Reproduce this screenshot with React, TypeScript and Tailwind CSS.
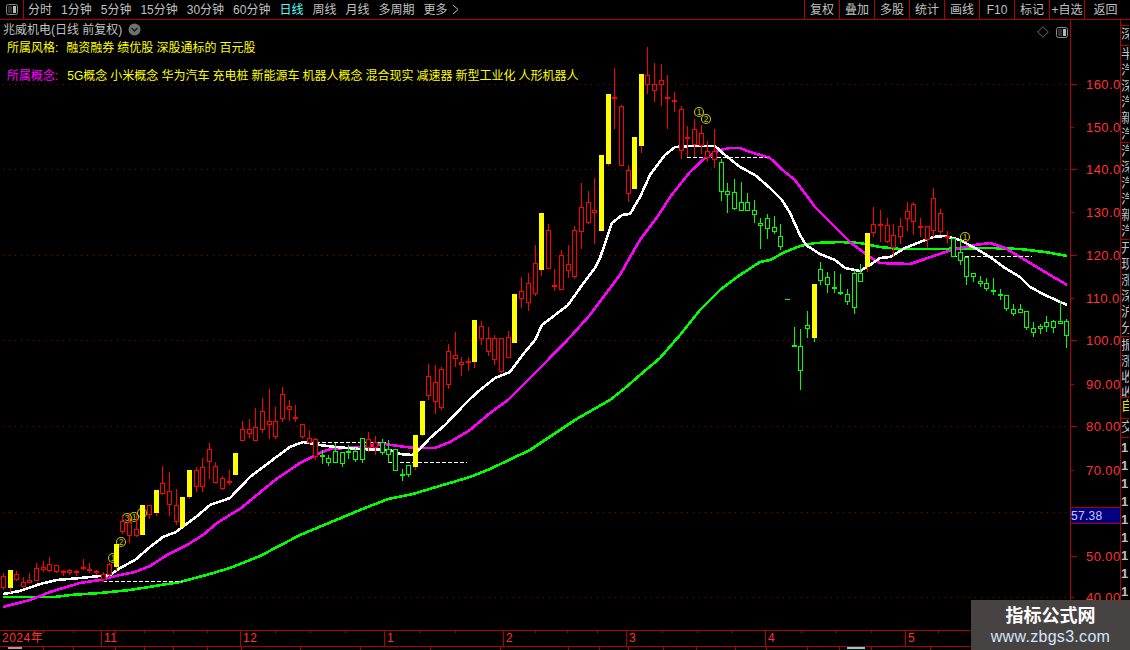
const RED = '#ff0000';
const GREEN = '#00ff00';
const YELLOW = '#ffff00';

// x, kind, wick top, body top, body bottom, wick bottom (page pixels)
// r = red, g = green, y = yellow bar with red wick, v = yellow bar with green wick
type Candle = [number, 'r' | 'g' | 'y' | 'v', number, number, number, number];

const candles: Candle[] = [
  [3, 'r', 573, 576, 588, 590], [10, 'y', 570, 570, 588, 593], [16, 'r', 571, 574, 580, 581],
  [23, 'r', 577, 582, 587, 587], [29, 'r', 573, 580, 583, 583], [36, 'r', 563, 568, 581, 581],
  [43, 'r', 561, 567, 570, 572], [49, 'r', 557, 564, 571, 572], [56, 'r', 565, 565, 572, 573],
  [63, 'r', 570, 571, 573, 576], [69, 'r', 569, 570, 573, 575], [76, 'r', 570, 571, 573, 576],
  [83, 'r', 559, 567, 569, 570], [89, 'r', 563, 569, 571, 573], [96, 'r', 570, 571, 573, 575],
  [103, 'r', 572, 574, 580, 582], [109, 'r', 563, 564, 575, 576], [116, 'y', 544, 544, 567, 571],
  [122, 'r', 515, 521, 532, 534], [129, 'r', 515, 522, 536, 543], [136, 'r', 515, 529, 536, 537],
  [142, 'y', 505, 505, 535, 535], [149, 'r', 505, 505, 515, 519], [156, 'y', 490, 490, 513, 516],
  [162, 'r', 466, 483, 494, 495], [169, 'r', 472, 491, 505, 516], [176, 'r', 489, 505, 522, 525],
  [182, 'y', 497, 497, 527, 527], [189, 'y', 470, 470, 497, 499], [196, 'r', 467, 470, 487, 492],
  [202, 'r', 458, 467, 487, 492], [209, 'r', 443, 449, 462, 479], [215, 'r', 462, 466, 483, 483],
  [222, 'r', 476, 478, 489, 490], [229, 'r', 470, 481, 483, 485], [235, 'y', 453, 453, 475, 475],
  [242, 'r', 421, 429, 441, 441], [249, 'r', 419, 429, 434, 438], [255, 'r', 408, 427, 441, 441],
  [262, 'r', 398, 411, 430, 433], [269, 'r', 389, 421, 425, 439], [275, 'r', 407, 421, 437, 439],
  [282, 'r', 387, 394, 419, 422], [289, 'r', 400, 406, 410, 421], [295, 'r', 405, 417, 419, 422],
  [302, 'r', 424, 424, 437, 439], [309, 'r', 430, 438, 443, 444], [315, 'r', 438, 439, 457, 460],
  [322, 'g', 450, 455, 457, 464], [328, 'g', 455, 458, 463, 466], [335, 'g', 443, 451, 463, 463],
  [342, 'g', 452, 452, 464, 467], [348, 'g', 445, 451, 453, 459], [355, 'g', 448, 451, 460, 462],
  [362, 'g', 438, 438, 460, 463], [368, 'r', 432, 439, 448, 452], [375, 'r', 436, 442, 448, 455],
  [382, 'g', 439, 442, 453, 455], [388, 'g', 440, 449, 455, 463], [395, 'g', 449, 449, 471, 471],
  [402, 'g', 469, 474, 476, 481], [408, 'g', 465, 465, 475, 477], [415, 'y', 435, 435, 467, 470],
  [422, 'y', 401, 401, 435, 436], [428, 'r', 364, 376, 396, 400], [435, 'r', 365, 382, 402, 414],
  [441, 'r', 367, 369, 408, 410], [448, 'r', 344, 351, 385, 389], [455, 'r', 332, 355, 359, 367],
  [461, 'r', 357, 362, 365, 376], [468, 'r', 357, 361, 363, 371], [474, 'y', 320, 320, 362, 368],
  [481, 'r', 321, 326, 339, 345], [488, 'r', 327, 338, 352, 356], [494, 'r', 335, 338, 360, 365],
  [501, 'r', 338, 338, 372, 373], [508, 'r', 331, 337, 358, 358], [514, 'y', 294, 294, 343, 343],
  [521, 'r', 277, 291, 299, 308], [528, 'r', 273, 283, 303, 311], [535, 'r', 245, 263, 294, 296],
  [541, 'y', 213, 213, 270, 276], [548, 'r', 224, 230, 269, 269], [554, 'r', 269, 285, 287, 291],
  [561, 'r', 250, 255, 290, 290], [568, 'r', 245, 264, 271, 278], [574, 'r', 226, 230, 277, 279],
  [581, 'r', 183, 207, 232, 249], [588, 'r', 191, 202, 223, 224], [594, 'r', 178, 210, 213, 244],
  [601, 'y', 155, 155, 231, 231], [608, 'y', 94, 94, 164, 166], [614, 'r', 68, 97, 99, 129],
  [621, 'r', 105, 106, 166, 166], [628, 'r', 165, 170, 194, 202], [634, 'y', 137, 137, 189, 189],
  [641, 'y', 74, 74, 146, 153], [647, 'r', 47, 75, 85, 94], [654, 'r', 63, 84, 91, 102],
  [661, 'r', 64, 80, 85, 106], [667, 'r', 75, 97, 99, 129], [674, 'r', 92, 100, 102, 112],
  [681, 'r', 106, 109, 151, 159], [687, 'r', 126, 137, 139, 157], [694, 'r', 119, 129, 145, 157],
  [701, 'r', 125, 133, 146, 154], [707, 'r', 141, 151, 158, 162], [714, 'r', 129, 151, 160, 168],
  [721, 'g', 159, 162, 192, 201], [727, 'g', 183, 191, 195, 213], [734, 'g', 179, 192, 209, 210],
  [741, 'g', 182, 202, 211, 211], [747, 'g', 193, 202, 211, 211], [754, 'g', 200, 210, 215, 223],
  [760, 'g', 218, 223, 226, 249], [767, 'g', 214, 218, 229, 239], [774, 'g', 216, 227, 232, 234],
  [780, 'g', 224, 236, 247, 250], [787, 'g', 299, 299, 300, 300], [794, 'g', 327, 345, 347, 347],
  [800, 'g', 329, 346, 371, 390], [807, 'g', 311, 325, 329, 338], [814, 'v', 284, 284, 338, 342],
  [820, 'g', 262, 269, 281, 285], [827, 'g', 272, 277, 285, 293], [834, 'g', 271, 287, 289, 293],
  [840, 'g', 274, 292, 294, 295], [847, 'g', 289, 294, 302, 305], [854, 'g', 270, 273, 308, 314],
  [860, 'g', 264, 273, 282, 282], [867, 'y', 233, 233, 267, 272], [873, 'r', 207, 224, 233, 237],
  [880, 'r', 210, 224, 226, 242], [887, 'r', 218, 225, 242, 243], [893, 'r', 224, 235, 248, 257],
  [900, 'r', 218, 226, 237, 244], [907, 'r', 202, 211, 219, 231], [913, 'r', 202, 204, 222, 235],
  [920, 'r', 218, 226, 228, 237], [927, 'r', 226, 226, 240, 248], [933, 'r', 188, 198, 231, 237],
  [940, 'r', 209, 213, 232, 235], [947, 'r', 231, 236, 238, 244], [953, 'g', 238, 238, 257, 257],
  [960, 'g', 240, 252, 261, 265], [966, 'g', 257, 257, 277, 285], [973, 'g', 273, 273, 277, 282],
  [980, 'g', 276, 281, 284, 287], [986, 'g', 278, 283, 289, 291], [993, 'g', 278, 290, 292, 295],
  [1000, 'g', 289, 294, 296, 300], [1006, 'g', 295, 295, 309, 311], [1013, 'g', 304, 309, 314, 316],
  [1020, 'g', 304, 309, 313, 313], [1026, 'g', 311, 311, 328, 330], [1033, 'g', 322, 328, 333, 337],
  [1040, 'g', 324, 326, 329, 334], [1046, 'g', 316, 322, 327, 332], [1053, 'g', 320, 321, 328, 333],
  [1060, 'g', 301, 321, 324, 324], [1066, 'g', 319, 321, 336, 348],
];

const whiteLine =
  '3,594 20,591 40,584 57,580 80,578 100,576 110,575 120,568 135,560 150,547 163,537 176,532 196,517 210,505 230,498 250,477 275,458 290,447 303,442 320,445 335,447 360,449 390,450 400,454 412,455 420,449 430,438 445,425 465,404 470,399 480,390 495,378 510,372 525,352 535,340 542,325 555,315 568,305 580,288 595,268 600,258 612,223 622,215 630,214 640,197 650,175 665,155 675,147 690,146 715,146 725,155 740,167 755,175 770,188 782,200 790,213 800,235 806,245 820,254 835,260 845,268 860,271 870,265 880,258 890,257 905,248 920,242 933,237 945,236 960,240 975,248 990,257 1005,268 1020,277 1030,287 1045,295 1067,305';
const magentaLine =
  '3,607 30,600 43,595 50,592 80,583 100,580 120,575 135,572 150,566 167,555 187,545 203,535 217,523 233,513 240,509 275,480 300,463 320,453 330,449 360,447 385,444 405,447 420,448 435,448 450,442 470,430 490,413 508,400 525,383 545,363 572,335 590,315 605,295 620,275 630,257 640,240 660,213 670,197 690,172 705,158 720,150 730,148 740,148 750,152 770,158 785,172 795,180 815,207 830,222 850,242 870,257 880,263 910,264 925,259 945,252 960,248 975,245 990,243 1005,248 1025,260 1045,272 1067,285';
const greenLine =
  '3,597 55,597 70,595 100,593 130,590 180,582 210,574 230,568 260,556 300,535 360,510 388,499 413,494 443,485 470,477 490,469 530,450 575,420 610,400 625,388 640,375 660,358 680,335 700,310 720,290 740,275 760,262 770,260 785,252 800,246 815,243 840,242 860,243 880,247 900,249 940,249 990,248 1020,249 1045,252 1067,256';

const gridYs = [84, 169, 255, 340, 426, 512, 597];
const dashes = [
  [103, 183, 581],
  [310, 387, 442],
  [388, 467, 462],
  [687, 767, 157],
  [953, 1032, 256],
];
const marks: [number, number, string][] = [
  [113, 558, '1'], [121, 542, '2'], [127, 518, '3'], [134, 517, '1'], [142, 513, '2'],
  [699, 112, '1'], [706, 119, '2'], [965, 237, '1'],
];

const axisLabels: [number, string][] = [
  [84, '160.0'], [127, '150.0'], [169, '140.0'], [212, '130.0'], [255, '120.0'], [298, '110.0'], [340, '100.0'],
  [384, '90.00'], [426, '80.00'], [470, '70.00'], [556, '50.00'], [597, '40.00'],
];

const tabs = ['分时', '1分钟', '5分钟', '15分钟', '30分钟', '60分钟', '日线', '周线', '月线', '多周期', '更多'];
const tools = ['复权', '叠加', '多股', '统计', '画线', 'F10', '标记', '+自选'];
const concepts = ['5G概念', '小米概念', '华为汽车', '充电桩', '新能源车', '机器人概念', '混合现实', '减速器', '新型工业化', '人形机器人'];
const styles = ['融资融券', '绩优股', '深股通标的', '百元股'];

const months = [
  { label: '2024年', w: 'w-[102px]' },
  { label: '11', w: 'w-[139px]' },
  { label: '12', w: 'w-[144px]' },
  { label: '1', w: 'w-[119px]' },
  { label: '2', w: 'w-[123px]' },
  { label: '3', w: 'w-[139px]' },
  { label: '4', w: 'w-[140px]' },
  { label: '5', w: 'w-[100px]' },
];
const axisTicks = [43, 73, 115, 144, 173, 207, 275, 310, 345, 420, 455, 535, 567, 597, 662, 697, 731, 801, 836, 871, 938];
const footTicks = [43, 73, 115, 144, 173, 207, 241, 300, 360, 430, 500, 568, 599, 628, 663, 696, 735, 766, 807, 839, 871, 930];

const sideCells = [
  { h: 'h-[20px]', rows: ['深'] },
  { h: 'h-[97px]', rows: ['半', '汽', '深', '汽', '新', '汽'] },
  { h: 'h-[97px]', rows: ['汽', '深', '汽', '汽', '新', '汽'] },
  { h: 'h-[97px]', rows: ['开', '现', '涨', '深', '沪', '分'] },
  { h: 'h-[61px]', rows: ['振', '涨', '收', '收'] },
];

function CandleMark({ c }: { c: Candle }) {
  const [x, kind, wt, bt, bb, wb] = c;
  const bar = kind === 'y' || kind === 'v';
  const color = kind === 'g' || kind === 'v' ? GREEN : RED;
  return (
    <g>
      <rect x={x} y={wt} width={1} height={wb - wt} fill={color} />
      {bar ? (
        <rect x={x - 2} y={bt} width={5} height={bb - bt} fill={YELLOW} />
      ) : (
        <>
          <rect x={x - 2} y={bt} width={5} height={bb - bt} fill={color} />
          {bb - bt > 2 && <rect x={x - 1} y={bt + 1} width={3} height={bb - bt - 2} fill="#000" />}
        </>
      )}
    </g>
  );
}

function PanelIcon() {
  return (
    <svg width="12" height="11" viewBox="0 0 12 11">
      <rect x="0.5" y="0.5" width="11" height="10" rx="2" fill="#000" stroke="#8a8a8a" />
      <rect x="2" y="2" width="4" height="7" fill="#303030" />
      <rect x="7" y="2" width="3" height="7" fill="#b8b8b8" />
    </svg>
  );
}

export default function App() {
  return (
    <div className="relative flex h-[650px] w-[1130px] flex-col overflow-hidden bg-black font-['Liberation_Sans','Noto_Sans_CJK_SC',sans-serif] text-[12px] text-[#c0c0c0]">
      {/* top toolbar */}
      <div className="flex h-[20px] shrink-0 items-center border-b border-[#b00000]">
        <div className="flex h-full w-[24px] items-center justify-center border-r border-[#b00000]">
          <PanelIcon />
        </div>
        <div className="ml-[4px] flex items-center gap-[9px] whitespace-nowrap">
          {tabs.map((t) => (
            <span key={t} className={t === '日线' ? 'text-[#55ffff]' : ''}>
              {t}
            </span>
          ))}
        </div>
        <svg className="ml-[4px]" width="7" height="11" viewBox="0 0 7 11">
          <path d="M1 1l5 4.5L1 10" fill="none" stroke="#c0c0c0" />
        </svg>
        <div className="ml-auto flex h-full">
          {tools.map((t) => (
            <div key={t} className="flex w-[35px] items-center justify-center whitespace-nowrap border-l border-[#b00000]">
              {t}
            </div>
          ))}
          <div className="flex w-[46px] items-center justify-center border-l border-[#b00000] pr-[4px]">返回</div>
        </div>
      </div>

      <div className="flex h-[610px] shrink-0">
        {/* chart */}
        <div className="relative w-[1070px] shrink-0">
          <svg className="block h-full w-full" viewBox="0 20 1070 610" shapeRendering="crispEdges">
            {gridYs.map((y) => (
              <line key={y} x1="3" x2="1068" y1={y + 0.5} y2={y + 0.5} stroke="#900000" strokeDasharray="1 5" />
            ))}
            <polyline points={greenLine} fill="none" stroke={GREEN} strokeWidth="2.6" />
            <polyline points={magentaLine} fill="none" stroke="#ff00ff" strokeWidth="2.6" />
            <polyline points={whiteLine} fill="none" stroke="#fff" strokeWidth="2.6" />
            {dashes.map(([x1, x2, y]) => (
              <line key={x1} x1={x1} x2={x2} y1={y + 0.5} y2={y + 0.5} stroke="#fff" strokeDasharray="4 2" />
            ))}
            <g shapeRendering="auto">
              {marks.map(([x, y, n]) => (
                <g key={`${x}-${y}`}>
                  <circle cx={x} cy={y} r="4.5" fill="none" stroke="#c4c400" strokeWidth="1.1" />
                  <text x={x} y={y + 3} textAnchor="middle" fontSize="8.5" fill="#c4c400" fontFamily="Liberation Sans">
                    {n}
                  </text>
                </g>
              ))}
            </g>
            {candles.map((c) => (
              <CandleMark key={c[0]} c={c} />
            ))}
          </svg>

          {/* titles over the chart */}
          <div className="absolute left-[3px] top-0 flex h-[19px] items-center whitespace-nowrap">
            <span className="w-[125px]">兆威机电(日线 前复权)</span>
            <svg width="13" height="13" viewBox="0 0 13 13">
              <circle cx="6.5" cy="6.5" r="6" fill="#707070" />
              <path d="M3.5 5l3 3 3-3" fill="none" stroke="#1a1a1a" strokeWidth="1.4" />
            </svg>
          </div>
          <div className="absolute left-[7px] top-[20px] flex h-[16px] items-center gap-[3px] whitespace-nowrap text-[#ffff00]">
            <span className="mr-[5px]">所属风格:</span>
            {styles.map((t) => (
              <span key={t}>{t}</span>
            ))}
          </div>
          <div className="absolute left-[7px] top-[48px] flex h-[16px] items-center gap-[3px] whitespace-nowrap text-[#ffff00]">
            <span className="mr-[6px] text-[#ff00ff]">所属概念:</span>
            {concepts.map((t) => (
              <span key={t}>{t}</span>
            ))}
          </div>
          <div className="absolute right-[2px] top-[6px] flex items-center gap-[7px]">
            <svg width="12" height="12" viewBox="0 0 12 12">
              <path d="M6 .7L11.3 6 6 11.3.7 6z" fill="none" stroke="#707070" />
            </svg>
            <PanelIcon />
          </div>
        </div>

        {/* price axis */}
        <div className="relative w-[51px] shrink-0 border-x border-[#b00000]">
          <svg className="block h-full w-full" viewBox="1071 20 49 610">
            {axisLabels.map(([y, label], i) => (
              <g key={label}>
                <line
                  x1="1071"
                  x2={i % 2 === 0 ? 1077 : 1074}
                  y1={y + 0.5}
                  y2={y + 0.5}
                  stroke="#b00000"
                  shapeRendering="crispEdges"
                />
                <text x="1086" y={y + 5} fontSize="13" letterSpacing="0.4" fill="#ff3232" fontFamily="Liberation Sans">
                  {label}
                </text>
              </g>
            ))}
          </svg>
          <div className="absolute left-0 right-0 top-[487px] flex h-[17px] items-center border-y border-[#b00000] bg-[#000080] text-[12px] tracking-[0.3px] text-[#c8c8ff]">
            57.38
          </div>
        </div>

        {/* clipped side panel */}
        <div className="w-[8px] shrink-0 overflow-hidden pt-[5px] leading-[16px] text-[13px]">
          {sideCells.map((cell, i) => (
            <div key={i} className={`${cell.h} overflow-hidden border-t border-[#b00000] whitespace-nowrap`}>
              {cell.rows.map((r, j) => (
                <div key={j}>{r}</div>
              ))}
            </div>
          ))}
          <div className="h-[21px] overflow-hidden border-t border-[#b00000] text-[#e0e000]">自</div>
          <div className="h-[19px] overflow-hidden border-t border-[#b00000]">交</div>
          <div className="border-t border-[#b00000] pt-[1px] font-bold">
            {Array.from({ length: 10 }, (_, i) => (
              <div key={i} className="h-[18px] leading-[18px]">
                1
              </div>
            ))}
          </div>
        </div>
      </div>

      {/* time axis */}
      <div className="relative flex h-[17px] shrink-0 border-y border-[#b00000] text-[12px] leading-[15px] text-[#ff3232]">
        {months.map((m) => (
          <div key={m.label} className={`${m.w} shrink-0 border-r border-[#b00000] pl-[2px] tracking-[0.5px]`}>
            {m.label}
          </div>
        ))}
        {axisTicks.map((x) => (
          <span key={x} className="absolute top-0 h-[2px] w-px bg-[#b00000]" style={{ left: x }} />
        ))}
      </div>
      <div className="relative h-[3px] shrink-0 overflow-hidden">
        {footTicks.map((x) => (
          <span key={x} className="absolute top-0 h-[3px] w-px bg-[#b00000]" style={{ left: x }} />
        ))}
        <span className="absolute left-[8px] top-0 h-[2px] w-[14px] bg-[#a0a0a0]" />
        <span className="absolute left-[847px] top-0 h-[2px] w-[18px] bg-[#66dddd]" />
      </div>

      {/* watermark */}
      <div className="absolute bottom-0 right-0 flex h-[50px] w-[159px] flex-col items-center justify-center bg-[#484343]">
        <span className="text-[18px] font-bold leading-[24px] text-white">指标公式网</span>
        <span className="text-[16px] leading-[18px] tracking-[0.3px] text-[#d3e6fb]">www.zbgs3.com</span>
      </div>
    </div>
  );
}
